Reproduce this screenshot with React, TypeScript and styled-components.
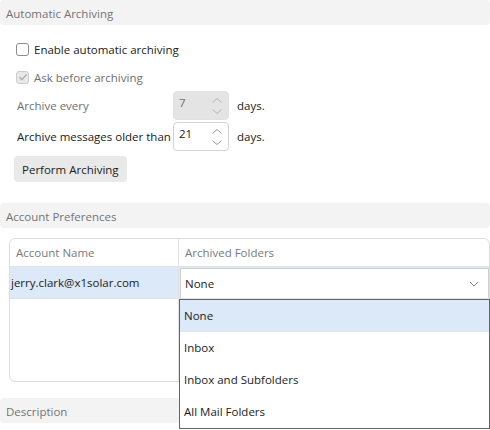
import React, { useState } from 'react';
import styled, { createGlobalStyle } from 'styled-components';

const GlobalStyle = createGlobalStyle`
  html, body {
    margin: 0;
    padding: 0;
    background: #ffffff;
    overflow: hidden;
  }
  body {
    font-family: 'Open Sans', 'Noto Sans', sans-serif;
    font-size: 11.5px;
    color: #1b1b1b;
    white-space: nowrap;
  }
`;

const Page = styled.div`
  position: relative;
  width: 490px;
  height: 430px;
  overflow: hidden;
  display: flex;
  flex-direction: column;
`;

const SectionHeader = styled.div<{ $top?: number }>`
  height: 25px;
  line-height: 27px;
  margin-top: ${p => p.$top ?? 0}px;
  padding-left: 6px;
  background: #f3f3f3;
  border-radius: 4px;
  color: #737373;
  flex-shrink: 0;
`;

const ArchiveBody = styled.div`
  display: flex;
  flex-direction: column;
  padding: 10px 0 0 16px;
`;

const CheckRow = styled.label<{ $disabled?: boolean }>`
  display: flex;
  align-items: center;
  gap: 5px;
  height: 28px;
  color: ${p => (p.$disabled ? '#6f6f6f' : '#1b1b1b')};
`;

const Box = styled.span<{ $disabled?: boolean }>`
  width: 13px;
  height: 13px;
  box-sizing: border-box;
  border: 1px solid ${p => (p.$disabled ? '#cdcdcd' : '#8c8c8c')};
  border-radius: 3px;
  background: ${p => (p.$disabled ? '#e8e8e8' : '#ffffff')};
  display: flex;
  align-items: center;
  justify-content: center;
`;

const SpinGrid = styled.div`
  display: grid;
  grid-template-columns: 156px 56px auto;
  row-gap: 2px;
  align-items: center;
  margin-left: 1px;
`;

const SpinLabel = styled.span<{ $disabled?: boolean }>`
  color: ${p => (p.$disabled ? '#6f6f6f' : '#1b1b1b')};
`;

const Spin = styled.div<{ $disabled?: boolean }>`
  position: relative;
  height: 29px;
  box-sizing: border-box;
  border: 1px solid ${p => (p.$disabled ? '#e2e2e2' : '#d4d4d4')};
  border-radius: 4px;
  background: ${p => (p.$disabled ? '#e4e4e4' : '#ffffff')};
  color: ${p => (p.$disabled ? '#707070' : '#1b1b1b')};
  display: flex;
  align-items: center;
  padding-left: 5px;
  padding-bottom: 6px;
`;

const SpinArrows = styled.svg`
  position: absolute;
  right: 5px;
  top: 5px;
`;

const Days = styled.span`
  padding-left: 8px;
`;

const ActionButton = styled.button`
  align-self: flex-start;
  margin: 5px 0 0 -2px;
  height: 26px;
  padding: 0 8px;
  border: none;
  border-radius: 4px;
  background: #e9e9e9;
  font: inherit;
  color: #1b1b1b;
`;

const Table = styled.div`
  margin: 10px 0 0 9px;
  height: 144px;
  box-sizing: border-box;
  border: 1px solid #dcdcdc;
  border-radius: 6px;
  display: grid;
  grid-template-columns: 169px 1fr;
  grid-template-rows: 28px 32px 1fr;
  overflow: hidden;
`;

const HeadCell = styled.div<{ $first?: boolean }>`
  display: flex;
  align-items: center;
  padding-left: 6px;
  color: #7a7a7a;
  border-bottom: 1px solid #e3e3e3;
  border-right: ${p => (p.$first ? '1px solid #e3e3e3' : 'none')};
`;

const Cell = styled.div<{ $selected?: boolean }>`
  display: flex;
  align-items: center;
  background: ${p => (p.$selected ? '#dce9f8' : '#ffffff')};
  border-right: 1px solid #e3e3e3;
  border-bottom: 1px solid #e3e3e3;
`;

const Account = styled.span`
  padding-left: 1px;
`;

const SelectCell = styled.div`
  background: #dce9f8;
  border-bottom: 1px solid #e3e3e3;
  padding: 1px 0 0 1px;
`;

const SelectBox = styled.div`
  height: 100%;
  box-sizing: border-box;
  background: #ffffff;
  border: 1px solid #d0d0d0;
  border-bottom: none;
  display: flex;
  align-items: center;
  justify-content: space-between;
  padding: 0 9px 0 4px;
`;

const EmptyCell = styled.div<{ $first?: boolean }>`
  border-right: ${p => (p.$first ? '1px solid #e3e3e3' : 'none')};
`;

const Menu = styled.ul`
  position: absolute;
  left: 179px;
  top: 299px;
  width: 311px;
  margin: 0;
  padding: 0;
  list-style: none;
  box-sizing: border-box;
  border: 1px solid #646464;
  background: #ffffff;
`;

const MenuItem = styled.li<{ $active?: boolean }>`
  height: 32px;
  line-height: 32px;
  padding-left: 4px;
  background: ${p => (p.$active ? '#dce9f8' : '#ffffff')};
`;

const Check = () => (
  <svg width="10" height="10" viewBox="0 0 10 10">
    <path d="M1.5 5.2 L4 7.6 L8.6 2.4" fill="none" stroke="#a6a6a6" strokeWidth="1.2" />
  </svg>
);

const Arrows = ({ color }: { color: string }) => (
  <SpinArrows width="12" height="18" viewBox="0 0 12 18">
    <path d="M1.5 5.5 L6 1.5 L10.5 5.5" fill="none" stroke={color} strokeWidth="1" />
    <path d="M1.5 12.5 L6 16.5 L10.5 12.5" fill="none" stroke={color} strokeWidth="1" />
  </SpinArrows>
);

const folders = ['None', 'Inbox', 'Inbox and Subfolders', 'All Mail Folders'];

export default function App() {
  const [enabled, setEnabled] = useState(false);
  const [folder, setFolder] = useState('None');

  return (
    <Page>
      <GlobalStyle />
      <SectionHeader>Automatic Archiving</SectionHeader>
      <ArchiveBody>
        <CheckRow onClick={() => setEnabled(!enabled)}>
          <Box>{enabled && <Check />}</Box>
          Enable automatic archiving
        </CheckRow>
        <CheckRow $disabled>
          <Box $disabled>
            <Check />
          </Box>
          Ask before archiving
        </CheckRow>
        <SpinGrid>
          <SpinLabel $disabled>Archive every</SpinLabel>
          <Spin $disabled>
            7
            <Arrows color="#b5b5b5" />
          </Spin>
          <Days>days.</Days>
          <SpinLabel>Archive messages older than</SpinLabel>
          <Spin>
            21
            <Arrows color="#9a9a9a" />
          </Spin>
          <Days>days.</Days>
        </SpinGrid>
        <ActionButton>Perform Archiving</ActionButton>
      </ArchiveBody>

      <SectionHeader $top={21}>Account Preferences</SectionHeader>
      <Table>
        <HeadCell $first>Account Name</HeadCell>
        <HeadCell>Archived Folders</HeadCell>
        <Cell $selected>
          <Account>jerry.clark@x1solar.com</Account>
        </Cell>
        <SelectCell>
          <SelectBox>
            {folder}
            <svg width="10" height="6" viewBox="0 0 10 6">
              <path d="M1 1 L5 5 L9 1" fill="none" stroke="#8a8a8a" strokeWidth="1" />
            </svg>
          </SelectBox>
        </SelectCell>
        <EmptyCell $first />
        <EmptyCell />
      </Table>

      <SectionHeader $top={16}>Description</SectionHeader>

      <Menu>
        {folders.map(f => (
          <MenuItem key={f} $active={f === folder} onClick={() => setFolder(f)}>
            {f}
          </MenuItem>
        ))}
      </Menu>
    </Page>
  );
}
